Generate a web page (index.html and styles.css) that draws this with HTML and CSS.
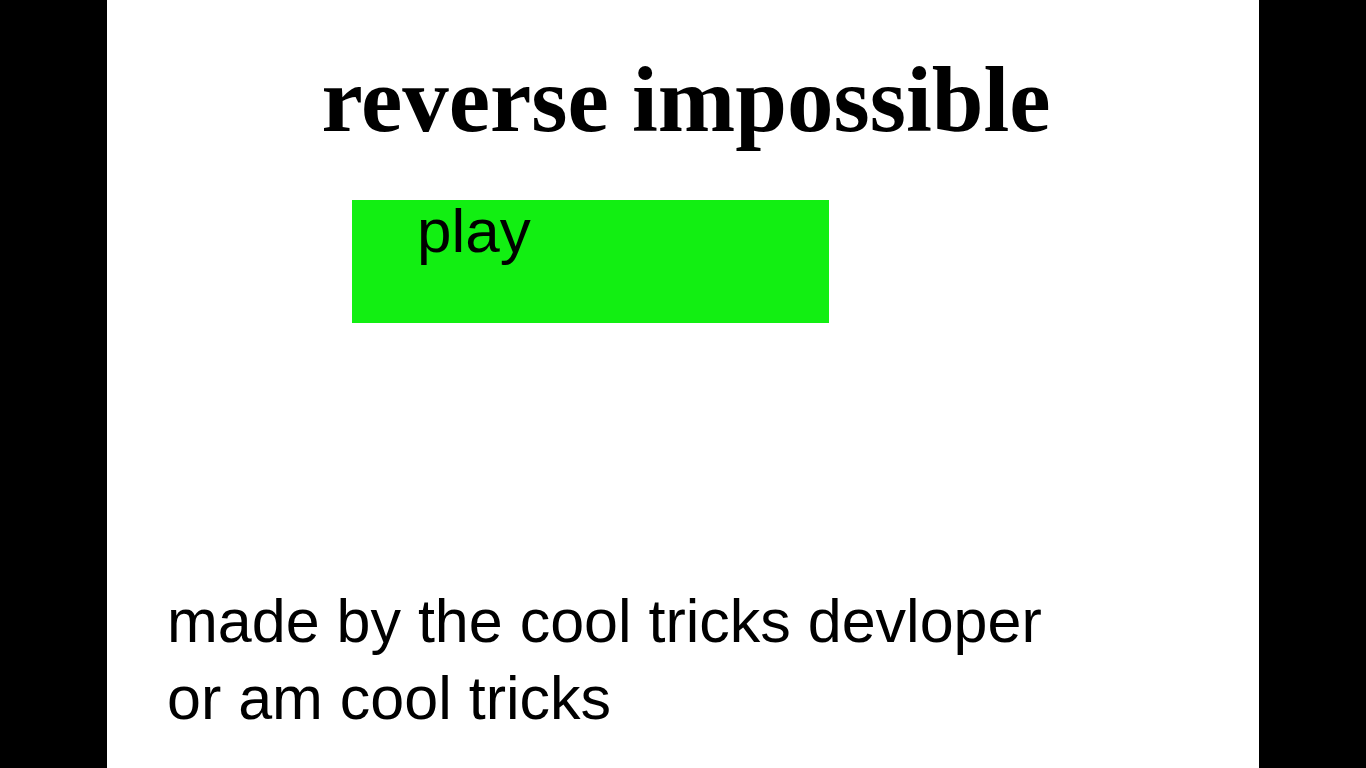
FILE: index.html
```html
<!DOCTYPE html>
<html lang="en">
<head>
    <meta charset="UTF-8">
    <title>reverse impossible</title>
    <link rel="stylesheet" href="styles.css">
</head>
<body>
    <div class="stage">
        <h1 class="title">reverse impossible</h1>
        <div class="play-button">play</div>
        <div class="credits">
            <p>made by the cool tricks devloper</p>
            <p>or am cool tricks</p>
        </div>
    </div>
</body>
</html>
```

FILE: styles.css
```css
body {
    margin: 0;
    padding: 0;
    background-color: #000;
    height: 100vh;
    overflow: hidden;
}
.stage {
    width: 1152px;
    height: 768px;
    margin: 0 auto;
    background-color: #fff;
    display: flex;
    flex-direction: column;
    color: #000;
}
.title {
    margin: 53px 0 0 6px;
    height: 93px;
    font-family: "Liberation Serif", "Times New Roman", serif;
    font-weight: bold;
    font-size: 93px;
    line-height: 1;
    text-align: center;
}
.play-button {
    margin: 54px 0 0 245px;
    width: 477px;
    height: 123px;
    box-sizing: border-box;
    padding-left: 65px;
    background-color: #12ef12;
    font-family: "Liberation Sans", Arial, sans-serif;
    font-size: 62px;
    line-height: 1;
    cursor: pointer;
}
.credits {
    margin-top: auto;
    padding: 0 0 31px 60px;
    font-family: "Liberation Sans", Arial, sans-serif;
    font-size: 61px;
    line-height: 77px;
}
.credits p {
    margin: 0;
}
```
